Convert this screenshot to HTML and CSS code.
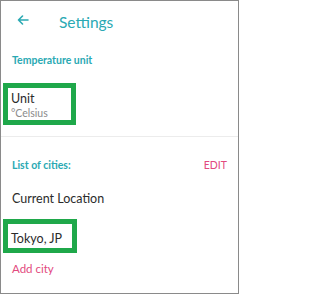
FILE: index.html
```html
<!DOCTYPE html>
<html>
<head>
<meta charset="utf-8">
<link rel="stylesheet" href="styles.css">
</head>
<body>
<div class="frame">
  <div class="header">
    <svg class="back" width="12" height="10" viewBox="0 0 12 10"><path d="M11 5H1.5M5.5 1L1.5 5l4 4" fill="none" stroke="#2aa9b3" stroke-width="1.6" stroke-linecap="round" stroke-linejoin="round"/></svg>
    <span class="title">Settings</span>
  </div>
  <div class="section first">
    <div class="sec-head"><span class="sec-title">Temperature unit</span></div>
    <div class="hl unit">
      <div class="item-main">Unit</div>
      <div class="item-sub">°Celsius</div>
    </div>
  </div>
  <div class="section second">
    <div class="sec-head"><span class="sec-title">List of cities:</span><span class="edit">EDIT</span></div>
    <div class="row">Current Location</div>
    <div class="hl city"><div class="item-main">Tokyo, JP</div></div>
    <div class="add">Add city</div>
  </div>
</div>
</body>
</html>
```
FILE: styles.css
```css
html, body { margin: 0; padding: 0; background: #fff; }
body { font-family: Lato, "Open Sans", sans-serif; }
.frame {
  box-sizing: border-box;
  width: 239px;
  height: 294px;
  border: 1px solid #8a8a8a;
  background: #fff;
  overflow: hidden;
}
.header {
  height: 38px;
  display: flex;
  align-items: center;
  padding-left: 16px;
}
.back { display: block; margin-top: -1px; }
.title {
  margin-left: 30px;
  font-size: 15.5px;
  color: #2aa9b3;
  line-height: 20px;
  margin-top: 3px;
}
.section.first {
  border-bottom: 1px solid #ececec;
  height: 97px;
}
.sec-head {
  display: flex;
  justify-content: space-between;
  align-items: baseline;
  padding: 15px 11px 0 11px;
  height: 28px;
  box-sizing: border-box;
}
.sec-title { font-size: 10.5px; font-weight: bold; color: #2aa9b3; }
.edit { font-size: 10.5px; color: #e2497e; }
.hl {
  box-sizing: border-box;
  margin-left: 2px;
  border: 5px solid #1fa84a;
  padding-left: 3px;
  background: #fff;
}
.unit {
  width: 73px;
  height: 42px;
  margin-top: 16px;
  padding-top: 3px;
}
.item-main { font-size: 12.5px; color: #2b2b2b; line-height: 16px; }
.item-sub { font-size: 10.5px; color: #8a8a8a; line-height: 13px; }
.section.second .sec-head { padding-top: 22px; height: 36px; }
.row {
  font-size: 12.5px;
  color: #2b2b2b;
  padding-left: 11px;
  height: 46px;
  line-height: 16px;
  padding-top: 18px;
  box-sizing: border-box;
}
.city {
  width: 74px;
  height: 34px;
  padding-top: 7px;
}
.add {
  font-size: 11.5px;
  color: #e2497e;
  padding-left: 11px;
  margin-top: 8px;
  line-height: 16px;
}
```
